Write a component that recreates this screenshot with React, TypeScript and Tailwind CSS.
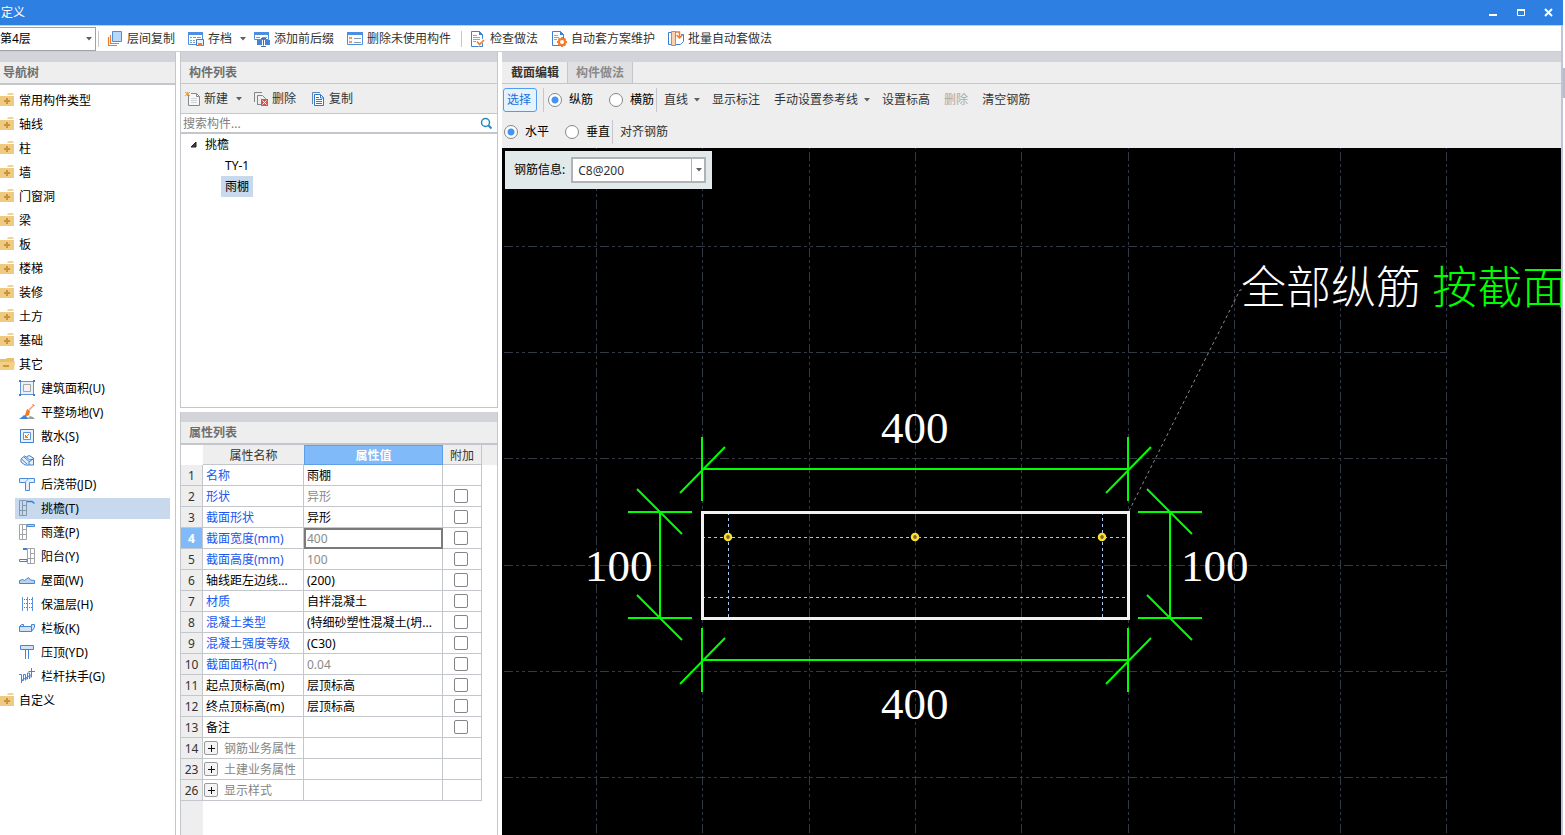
import React from 'react';
import clsx from 'clsx';

const folders = ['常用构件类型', '轴线', '柱', '墙', '门窗洞', '梁', '板', '楼梯', '装修', '土方', '基础'];

const otherItems = [
    { name: '建筑面积(U)', icon: 'area' },
    { name: '平整场地(V)', icon: 'ground' },
    { name: '散水(S)', icon: 'apron' },
    { name: '台阶', icon: 'steps' },
    { name: '后浇带(JD)', icon: 'strip' },
    { name: '挑檐(T)', icon: 'eave' },
    { name: '雨蓬(P)', icon: 'canopy' },
    { name: '阳台(Y)', icon: 'balcony' },
    { name: '屋面(W)', icon: 'roof' },
    { name: '保温层(H)', icon: 'insulation' },
    { name: '栏板(K)', icon: 'board' },
    { name: '压顶(YD)', icon: 'coping' },
    { name: '栏杆扶手(G)', icon: 'railing' },
];

type Prop = { no: number; name: string; value?: string; blue?: boolean; gray?: boolean; check?: boolean; group?: boolean };

const props: Prop[] = [
    { no: 1, name: '名称', value: '雨棚', blue: true },
    { no: 2, name: '形状', value: '异形', blue: true, gray: true, check: true },
    { no: 3, name: '截面形状', value: '异形', blue: true, check: true },
    { no: 4, name: '截面宽度(mm)', value: '400', blue: true, gray: true, check: true },
    { no: 5, name: '截面高度(mm)', value: '100', blue: true, gray: true, check: true },
    { no: 6, name: '轴线距左边线...', value: '(200)', check: true },
    { no: 7, name: '材质', value: '自拌混凝土', blue: true, check: true },
    { no: 8, name: '混凝土类型', value: '(特细砂塑性混凝土(坍...', blue: true, check: true },
    { no: 9, name: '混凝土强度等级', value: '(C30)', blue: true, check: true },
    { no: 10, name: '截面面积(m²)', value: '0.04', blue: true, gray: true, check: true },
    { no: 11, name: '起点顶标高(m)', value: '层顶标高', check: true },
    { no: 12, name: '终点顶标高(m)', value: '层顶标高', check: true },
    { no: 13, name: '备注', check: true },
    { no: 14, name: '钢筋业务属性', group: true },
    { no: 23, name: '土建业务属性', group: true },
    { no: 26, name: '显示样式', group: true },
];

const Svg: React.FC<{ children: React.ReactNode }> = ({ children }) => (
    <svg width="16" height="16" viewBox="0 0 16 16" fill="none" className="shrink-0" aria-hidden="true">{children}</svg>
);

const Caret: React.FC = () => (
    <svg width="6" height="4" viewBox="0 0 6 4" className="shrink-0" aria-hidden="true"><path d="M0 0h6L3 3.5z" fill="#606060" /></svg>
);

const Sep: React.FC<{ className?: string }> = ({ className }) => <div className={clsx('w-px bg-[#c6c7cb]', className)} />;

const wall = 'M.5.5h7v15h-7zM3.5.5v15M.5 10.5h3M3.5 5.5h4M3.5 10.5h4';

const icons: Record<string, React.ReactNode> = {
    area: <><path d="M1.5 1.5h13v13h-13z" fill="#e9f0fa" stroke="#6094d8" /><path d="M4.5 4.5h7v7h-7z" fill="#f3f3f3" stroke="#a5a5a5" /><path d="M0 0h2v2H0zM14 0h2v2h-2zM0 14h2v2H0zM14 14h2v2h-2z" fill="#4878ba" /></>,
    ground: <><path d="M15 1l-5 5" stroke="#f0a070" strokeWidth="1.5" /><path d="M13.500 0l2 2" stroke="#f07820" /><path d="M8 5l3 2-1 4-3 1.500H5.500z" fill="#f47a20" /><path d="M0 15l3-2 2-2 3 2 2 2z" fill="#3d83d3" /><path d="M8 15l3-3 3 1 2 2z" fill="#9aa0a8" /></>,
    apron: <><path d="M1.5 1.5h13v13h-13z" fill="#eaf1fb" stroke="#3f83d2" /><path d="M4.5 4.5h7v7h-7z" fill="#fff" stroke="#5a95da" /><path d="M10 6L6.5 9.5M6.5 7v2.5H9" stroke="#e8742a" /></>,
    steps: <><path d="M2 10V7l3.500-3 2 1 2.500-1.500L14.500 6v7H6z" fill="#e6effa" stroke="#3f83d2" /><path d="M5 5l5 4.500M3 7.500l5 4.500M7.500 5l3 3 4-1M10 13v-3l4-3" stroke="#3f83d2" /></>,
    strip: <><path d="M.5 2.5h15v4h-5v8h-4v-8h-6z" fill="#e5effb" stroke="#4a8ad6" /><path d="M6.5 6.5c0-2 2-2 3-4" stroke="#6aa8d6" /></>,
    eave: <><path d={wall} stroke="#8099ad" /><path d="M8 1.5h5l2.500 2" stroke="#2f80d8" strokeWidth="1.5" /></>,
    canopy: <><path d={wall} stroke="#a0a3a8" /><path d="M8 .5h7.5v2H8z" fill="#b8d5f5" stroke="#4a88d0" /></>,
    balcony: <><path d={wall} stroke="#a0a3a8" transform="translate(8 0)" /><path d="M4 .5h4M4 1.5h4M.5 11.5H8v2H.5z" stroke="#3a82d6" /></>,
    roof: <path d="M.5 11.5v-3l3-1 2 1 4-3 2 2.500 4 .5v3z" fill="#b9d3f2" stroke="#4685d0" />,
    insulation: <><path d="M3.5 1v14M13.5 1v14M8.5 1v14" stroke="#5c94da" /><path d="M5 3.5h3M10 3.5h3M5 7.5h3M10 7.5h3M5 11.5h3M10 11.5h3" stroke="#4a7cba" strokeDasharray="1 1" /></>,
    board: <path d="M.5 6.5h12v5H.5zM.5 6.5l2-2h2v2M12.500 11.500l3-4v-3h-3v2" fill="#d3e3f6" stroke="#4685d0" />,
    coping: <><path d="M1.5 1.5h13v4h-13z" fill="#d3e3f6" stroke="#4685d0" /><path d="M6.5 6v9M9.5 6v9" stroke="#4685d0" /></>,
    railing: <path d="M0 6.500h2.500V15M2.500 12.500h2v-6h2v6M6.500 11h2V5h2v6M10.500 9h2V3M9.500 3.500H16M12.500 0v3M2.500 12.500l10-6" stroke="#4685d0" />,
    layers: <><path d="M1.5 6v8.5H10M3.5 4v8.5H12" stroke="#f07c2c" strokeWidth="1.2" /><path d="M5.5.5h9v10h-9z" fill="#b8d8fb" stroke="#4c8fe0" /></>,
    archive: <><path d="M.5 1.5h14v12H.5z" fill="#fff" stroke="#4c8fe0" /><path d="M0 1h15v3H0z" fill="#4c8fe0" /><path d="M2 6.5h2M5 6.5h3M9 6.5h4M2 9.5h2M5 9.5h2M2 11.5h2M5 11.5h2" stroke="#8a9bb0" /><path d="M8.5 8.5h7v6h-7z" fill="#eaf3fd" stroke="#3a79ca" /><path d="M10 12h4v3h-4z" fill="#f07c2c" /></>,
    affix: <><path d="M.5 1.5h14v7H.5z" fill="#fff" stroke="#4c8fe0" /><path d="M0 1h15v3H0z" fill="#4c8fe0" /><path d="M2 6.5h4M8 6.5h5" stroke="#8a9bb0" /><path d="M3 9h5v5H3zM11 9h5v5h-5z" fill="#4583d6" /><path d="M7 7.5h5M9.5 7.5v7M7 15.5h5" stroke="#4a6d9c" /></>,
    unused: <><path d="M.5 1.5h15v12H.5z" fill="#fff" stroke="#4c8fe0" /><path d="M0 1h16v3H0z" fill="#4c8fe0" /><path d="M2 6l3 2M5 6l-3 2M2 10l3 2M5 10l-3 2" stroke="#e08a3a" /><path d="M7 7.5h7M7 11.5h7" stroke="#8a9bb0" /></>,
    check: <><path d="M1.5.5h8l3 3v12h-11z" fill="#fff" stroke="#3f7fd0" /><path d="M9 0l4 4H9z" fill="#3f7fd0" /><path d="M3 4.5h4M3 6.5h7M3 8.5h7M3 10.5h3" stroke="#9aa5b3" /><path d="M6.500 10.500l2.500 3 5-5" stroke="#fff" strokeWidth="3" /><path d="M7 10.500l2.500 3 4.500-4.500" stroke="#f07c2c" strokeWidth="1.6" /></>,
    scheme: <><path d="M1.5.5h8l3 3v11h-11z" fill="#fff" stroke="#3f7fd0" /><path d="M9 0l4 4H9z" fill="#3f7fd0" /><path d="M3 4.5h4M3 6.5h5M3 8.5h3" stroke="#9aa5b3" /><circle cx="11" cy="11" r="3" fill="#fff" stroke="#f07c2c" strokeWidth="2" /><path d="M11 6v2M11 14v2M6 11h2M14 11h2M7.500 7.500l1 1M13.500 13.500l1 1M14.500 7.500l-1 1M7.500 14.500l1-1" stroke="#f07c2c" strokeWidth="2" /></>,
    batch: <><path d="M4 1.5H.5v12H4" stroke="#3f7fd0" /><path d="M13 3.5h2.500v7l-3 3H8" fill="#fff" stroke="#3f7fd0" /><path d="M3.5.5h4v14h-4z" fill="#fbd2b0" stroke="#f07c2c" /><path d="M7 1h4.500v5M8.500 4l3 3 3-3" stroke="#f07c2c" strokeWidth="1.5" /></>,
    create: <><path d="M3.5 4v10.5h11v-9l-3-3H6" fill="#f7f7f7" stroke="#84898e" /><path d="M11.5 2.5v3h3" stroke="#84898e" /><path d="M6 7.5h6M6 9.5h6M6 11.5h6" stroke="#cfd3d8" /><path d="M0 1l5 4M5 1L0 5M2.5 1v4M1 3h3" stroke="#f59a23" /></>,
    remove: <><path d="M1.5 11V1.5H9M4.5 14V4.5h5l3 3V9M4.5 13.5H8" stroke="#7f868c" /><path d="M8 8h7v7H8z" fill="#d9534f" /><path d="M9.5 9.5l4 4M13.5 9.5l-4 4" stroke="#fff" /></>,
    copy: <><path d="M2.5 13V1.5H10" stroke="#5f87b8" /><path d="M4.500 3.500h6l3 3v8h-9z" fill="#fff" stroke="#2f77cc" /><path d="M10.5 3.500v3.500H14" stroke="#2f77cc" /><path d="M6 6.500h3M6 8.5h6M6 10.5h6M6 12.5h6" stroke="#2f77cc" /></>,
};

const Folder: React.FC<{ open?: boolean }> = ({ open }) => (
    <svg width="15" height="14" viewBox="0 0 15 14" className="shrink-0" aria-hidden="true">
        {open ? (
            <>
                <path d="M0 2h6l1-1h7v11H0z" fill="#e8c06c" />
                <path d="M0 5h12l3-1-1 9H0z" fill="#f2cf85" />
                <path d="M3 8h6v2H3z" fill="#c99a3a" />
            </>
        ) : (
            <>
                <path d="M8 0h5l1 2H7z" fill="#f0d59b" />
                <path d="M0 3h14v10H0z" fill="#efca80" />
                <path d="M4 7h6v2H4zM6 5h2v6H6z" fill="#c4953a" />
            </>
        )}
    </svg>
);

const PanelHead: React.FC<{ title: string; className?: string }> = ({ title, className }) => (
    <>
        <div className="h-2.5 bg-[#d3d4da]" />
        <h2 className={clsx('border-[#c3c6cb] bg-[#eee] leading-[22px] font-bold text-[#6e6e6e]', className)}>{title}</h2>
    </>
);

const ToolButton: React.FC<{ icon: string; text: string; caret?: boolean }> = ({ icon, text, caret }) => (
    <button className={clsx('flex h-[22px] items-center gap-1 whitespace-nowrap rounded-sm pl-1.5', caret ? 'pr-px' : 'pr-1.5')}>
        <Svg>{icons[icon]}</Svg>
        <span>{text}</span>
        {caret && <span className="pl-1"><Caret /></span>}
    </button>
);

const Radio: React.FC<{ name: string; text: string; checked?: boolean }> = ({ name, text, checked }) => (
    <label className="flex items-center gap-[7px] whitespace-nowrap text-black">
        <input
            type="radio"
            name={name}
            defaultChecked={checked}
            className="size-3.5 appearance-none rounded-full border border-[#868686] bg-white checked:bg-[radial-gradient(circle,#3f96f5_3px,#fff_4px)]"
        />
        {text}
    </label>
);

const NavTree: React.FC = () => (
    <nav className="flex w-44 shrink-0 flex-col border-r border-[#c3c6cb]">
        <PanelHead title="导航树" className="h-[23px] border-b-2 pl-[3px]" />
        <ul className="pt-[3px] text-black">
            {folders.map(name => (
                <li key={name}>
                    <button className="flex h-6 items-center gap-1"><Folder /><span className="pt-0.5">{name}</span></button>
                </li>
            ))}
            <li>
                <button className="flex h-6 items-center gap-1"><Folder open /><span className="pt-0.5">其它</span></button>
                <ul>
                    {otherItems.map(item => (
                        <li key={item.name} className="flex h-6 items-center pr-[5px] pl-[15px]">
                            <button className={clsx('flex h-[21px] w-full items-center gap-1.5 pl-1', item.icon === 'eave' && 'bg-[#c8d9ee]')}>
                                <Svg>{icons[item.icon]}</Svg>
                                <span className="pt-0.5">{item.name}</span>
                            </button>
                        </li>
                    ))}
                </ul>
            </li>
            <li>
                <button className="flex h-6 items-center gap-1"><Folder /><span className="pt-0.5">自定义</span></button>
            </li>
        </ul>
    </nav>
);

const ComponentList: React.FC = () => (
    <section className="border border-t-0 border-[#c3c6cb]">
        <PanelHead title="构件列表" className="h-[22px] border-b pl-2" />
        <div className="flex h-[30px] items-center border-b border-[#c3c6cb] bg-[#eee] pl-1">
            <button className="flex items-center gap-[3px]"><Svg>{icons.create}</Svg><span>新建</span><span className="px-[5px]"><Caret /></span></button>
            <button className="flex items-center gap-[3px] px-1.5"><Svg>{icons.remove}</Svg>删除</button>
            <button className="flex items-center gap-[3px] px-2"><Svg>{icons.copy}</Svg>复制</button>
        </div>
        <div className="flex h-5 items-center border-b-2 border-[#c3c6cb] pr-1">
            <input aria-label="搜索构件" placeholder="搜索构件..." className="h-full min-w-0 flex-1 pl-0.5 outline-none placeholder:text-[#808080]" />
            <svg width="13" height="13" viewBox="0 0 13 13" fill="none" aria-hidden="true">
                <circle cx="5.5" cy="5.5" r="4" stroke="#2a86c0" strokeWidth="1.5" />
                <path d="M8.5 8.5l3 3" stroke="#2a86c0" strokeWidth="2" />
            </svg>
        </div>
        <ul className="min-h-[273px] text-black">
            <li>
                <div className="flex h-[21px] items-center gap-[7px] pl-[9px]">
                    <svg width="8" height="8" viewBox="0 0 8 8" aria-hidden="true"><path d="M6 1v5H1z" fill="#404040" stroke="#222" /></svg>
                    挑檐
                </div>
                <ul className="pl-10">
                    <li><button className="h-[21px] px-1">TY-1</button></li>
                    <li><button className="h-[21px] bg-[#c8d9ee] px-1">雨棚</button></li>
                </ul>
            </li>
        </ul>
    </section>
);

const PropertyTable: React.FC = () => (
    <section className="flex flex-1 flex-col border-x border-[#c3c6cb]">
        <PanelHead title="属性列表" className="h-[23px] border-b-2 pl-2" />
        <table className="w-full table-fixed border-separate border-spacing-0 text-black">
            <colgroup>
                <col className="w-[22px]" />
                <col className="w-[101px]" />
                <col className="w-[139px]" />
                <col className="w-[39px]" />
                <col />
            </colgroup>
            <thead>
                <tr className="h-5 text-[#333]">
                    <td />
                    <th className="border-b border-[#c3c6cb] bg-[#eee] p-0 pt-0.5 font-normal">属性名称</th>
                    <th className="border border-[#5f9fe8] bg-[#80baf9] p-0 pt-px font-bold text-white">属性值</th>
                    <th className="border-r border-b border-[#c3c6cb] bg-[#eee] p-0 pt-0.5 font-normal">附加</th>
                    <td className="bg-[#eee]" />
                </tr>
            </thead>
            <tbody>
                {props.map(p => (
                    <tr key={p.no} className="h-[21px]">
                        <th className={clsx('border-r border-b border-[#c3c6cb] p-0 pt-0.5', p.no === 4 ? 'bg-[#80baf9] font-bold text-white' : 'bg-[#eee] font-normal text-[#333]')}>{p.no}</th>
                        <td className={clsx('overflow-hidden border-r border-b border-[#c3c6cb] p-0 whitespace-nowrap', p.blue && 'text-[#1a56f0]', p.group ? 'pl-px text-[#858585]' : 'pt-0.5 pl-[3px]')}>
                            {p.group ? (
                                <div className="flex items-center gap-1.5">
                                    <button aria-label={'展开' + p.name} className="flex size-3.5 items-center justify-center rounded-xs border border-[#999] bg-[#f4f4f4]">
                                        <svg width="7" height="7" viewBox="0 0 7 7" aria-hidden="true"><path d="M0 3.5h7M3.5 0v7" stroke="#111" /></svg>
                                    </button>
                                    <span className="pt-0.5">{p.name}</span>
                                </div>
                            ) : p.name}
                        </td>
                        <td className={clsx('overflow-hidden border-r border-b border-[#c3c6cb] p-0 pt-0.5 pl-[3px] whitespace-nowrap', p.gray && 'text-[#8a8a8a]', p.no === 4 && 'outline-2 -outline-offset-2 outline-[#7b7b7b]')}>{p.value}</td>
                        <td className="border-r border-b border-[#c3c6cb] p-0 pr-0.5">
                            {p.check && <input type="checkbox" aria-label={p.name + '附加'} className="mx-auto block size-3.5 appearance-none rounded-xs border border-[#858585] bg-white" />}
                        </td>
                        <td />
                    </tr>
                ))}
            </tbody>
        </table>
        <div className="w-[22px] flex-1 bg-[#eee]" />
    </section>
);

const gridX = [94, 200, 307, 413, 519, 626, 732, 838, 944];
const gridY = [98, 204, 310, 417, 523, 629];

// widths are dimensioned above and below, heights left and right
const Drawing: React.FC = () => (
    <svg className="min-h-0 w-full flex-1 bg-black" role="img" aria-label="雨棚截面">
        <g stroke="#323944" strokeDasharray="9 3 3 3 3 3" shapeRendering="crispEdges">
            {gridX.map(x => <line key={x} x1={x + 0.5} y1="-20" x2={x + 0.5} y2="100%" />)}
            {gridY.map(y => <line key={y} x1="2" y1={y + 0.5} x2="944" y2={y + 0.5} />)}
        </g>
        <g stroke="#a8c8ee" strokeDasharray="3 3" shapeRendering="crispEdges">
            <path d="M200 389.5h426M200 449.5h426M226.5 364v106M600.5 364v106" />
        </g>
        <rect x="200.5" y="364.5" width="426" height="106" fill="none" stroke="#f2f2f2" strokeWidth="3" shapeRendering="crispEdges" />
        <path d="M627 363L738 142h4" fill="none" stroke="#8c8c8c" strokeDasharray="3 3" />
        {[226, 413, 600].map(x => (
            <g key={x}>
                <circle cx={x} cy="389" r="3" fill="#333" stroke="#fbe02c" strokeWidth="2.5" />
                <path d={`M${x - 1} 388v2M${x + 1} 388v2`} stroke="#c8a030" />
            </g>
        ))}
        <g stroke="#0f0" strokeWidth="2" fill="none">
            {[321, 512].map(y => (
                <React.Fragment key={y}>
                    <path d={`M200 ${y}h426`} />
                    {[200, 626].map(x => <path key={x} d={`M${x} ${y - 32}v64M${x - 22} ${y + 24}l45-46`} />)}
                </React.Fragment>
            ))}
            {[158, 668].map(x => (
                <React.Fragment key={x}>
                    <path d={`M${x} 364v106`} />
                    {[364, 470].map(y => <path key={y} d={`M${x - 32} ${y}h64M${x - 23} ${y - 23}l45 45`} />)}
                </React.Fragment>
            ))}
        </g>
        <g fill="#fff" fontSize="45" className="font-['Liberation_Serif','Noto_Sans_CJK_SC',serif]">
            <text x="379" y="295">400</text>
            <text x="379" y="571">400</text>
            <text x="83" y="433">100</text>
            <text x="679" y="433">100</text>
            <text x="739" y="156" className="font-light">全部纵筋 <tspan fill="#0f0">按截面</tspan></text>
        </g>
    </svg>
);

const SectionEditor: React.FC = () => (
    <main className="flex min-w-0 flex-1 flex-col overflow-hidden bg-[#eee]">
        <div className="h-2.5 bg-[#d3d4da]" />
        <div className="flex h-[22px] border-b border-[#c3c6cb] pl-px font-bold" role="tablist">
            <button role="tab" aria-selected="true" className="border-r border-[#c3c6cb] px-2 text-[#333]">截面编辑</button>
            <button role="tab" aria-selected="false" className="border-r border-[#c3c6cb] bg-[#e0e0e2] px-2 text-[#8a8a8a]">构件做法</button>
        </div>
        <div className="flex h-8 items-center whitespace-nowrap">
            <button className="ml-px h-6 rounded-[3px] border border-[#4f9eee] bg-[#e6f2fd] pr-[5px] pl-[3px] text-[#1a6fd8]">选择</button>
            <Sep className="mr-1 ml-1.5 h-6" />
            <div className="flex gap-4">
                <Radio name="bar" text="纵筋" checked />
                <Radio name="bar" text="横筋" />
            </div>
            <Sep className="mr-[7px] ml-0.5 h-6" />
            <div className="flex gap-3.5">
                <button className="-mr-0.5 flex items-center gap-1.5">直线 <Caret /></button>
                <button>显示标注</button>
                <button className="-mr-0.5 flex items-center gap-1.5">手动设置参考线 <Caret /></button>
                <button>设置标高</button>
                <button disabled className="text-[#a9a9a9]">删除</button>
                <button>清空钢筋</button>
            </div>
        </div>
        <div className="flex h-8 items-center pl-0.5 whitespace-nowrap">
            <div className="flex gap-4">
                <Radio name="direction" text="水平" checked />
                <Radio name="direction" text="垂直" />
            </div>
            <Sep className="mr-[7px] ml-0.5 h-6" />
            <button>对齐钢筋</button>
        </div>
        <div className="relative flex flex-1 flex-col">
            <Drawing />
            <div className="absolute top-[3px] left-[3px] flex h-[38px] items-center gap-1.5 bg-[#e1e9eb] pr-1.5 pl-[9px] text-black">
                <label htmlFor="rebar">钢筋信息:</label>
                <div className="relative">
                    <select id="rebar" className="block h-[26px] w-[135px] appearance-none border-2 border-[#b0b2b5] bg-white pt-0.5 pl-[5px] text-[#333]">
                        <option>C8@200</option>
                    </select>
                    <div className="pointer-events-none absolute inset-y-0 right-0 flex w-[15px] items-center justify-center border-l border-[#b0b2b5]"><Caret /></div>
                </div>
            </div>
        </div>
    </main>
);

const App: React.FC = () => (
    <div className="flex min-h-screen bg-white font-['Noto_Sans','Noto_Sans_CJK_SC',sans-serif] text-xs text-[#333]">
        <div className="flex min-w-0 flex-1 flex-col">
            <header className="flex h-[25px] items-center justify-between bg-[#2d80e2] pl-px text-white">
                <h1>定义</h1>
                <div className="flex gap-3 pr-1.5">
                    <button aria-label="最小化"><svg width="16" height="16" viewBox="0 0 16 16" aria-hidden="true"><path d="M4 9h8v2H4z" fill="#fff" /></svg></button>
                    <button aria-label="最大化"><svg width="16" height="16" viewBox="0 0 16 16" fill="none" aria-hidden="true"><path d="M4.5 5h7v5.5h-7z" stroke="#fff" /><path d="M4 5h8" stroke="#fff" strokeWidth="2" /></svg></button>
                    <button aria-label="关闭"><svg width="16" height="16" viewBox="0 0 16 16" aria-hidden="true"><path d="M4 4l7 7M11 4l-7 7" stroke="#fff" strokeWidth="2" /></svg></button>
                </div>
            </header>
            <div className="flex flex-1 flex-col border-r-2 border-[#bcc6d4]">
                <div className="flex h-[27px] items-center border-y border-[#c9ccd1] text-[#333]">
                    <div className="relative">
                        <select aria-label="楼层" className="block h-6 w-24 appearance-none border border-l-0 border-[#a0a2a5] bg-white text-black">
                            <option>第4层</option>
                        </select>
                        <div className="pointer-events-none absolute inset-y-0 right-1 flex items-center"><Caret /></div>
                    </div>
                    <Sep className="mx-0.5 h-4" />
                    <div className="flex gap-px">
                        <ToolButton icon="layers" text="层间复制" />
                        <ToolButton icon="archive" text="存档" caret />
                        <ToolButton icon="affix" text="添加前后缀" />
                        <ToolButton icon="unused" text="删除未使用构件" />
                    </div>
                    <Sep className="mr-0.5 ml-1 h-4" />
                    <div className="flex gap-px">
                        <ToolButton icon="check" text="检查做法" />
                        <ToolButton icon="scheme" text="自动套方案维护" />
                        <ToolButton icon="batch" text="批量自动套做法" />
                    </div>
                </div>
                <div className="flex flex-1 gap-1">
                    <NavTree />
                    <div className="flex w-[318px] shrink-0 flex-col gap-1">
                        <ComponentList />
                        <PropertyTable />
                    </div>
                    <SectionEditor />
                </div>
            </div>
        </div>
        <div className="w-0.5 shrink-0 bg-[linear-gradient(#fff_68px,#b9bcc3_68px,#b9bcc3_98px,#fff_98px)]" />
    </div>
);

export default App;
